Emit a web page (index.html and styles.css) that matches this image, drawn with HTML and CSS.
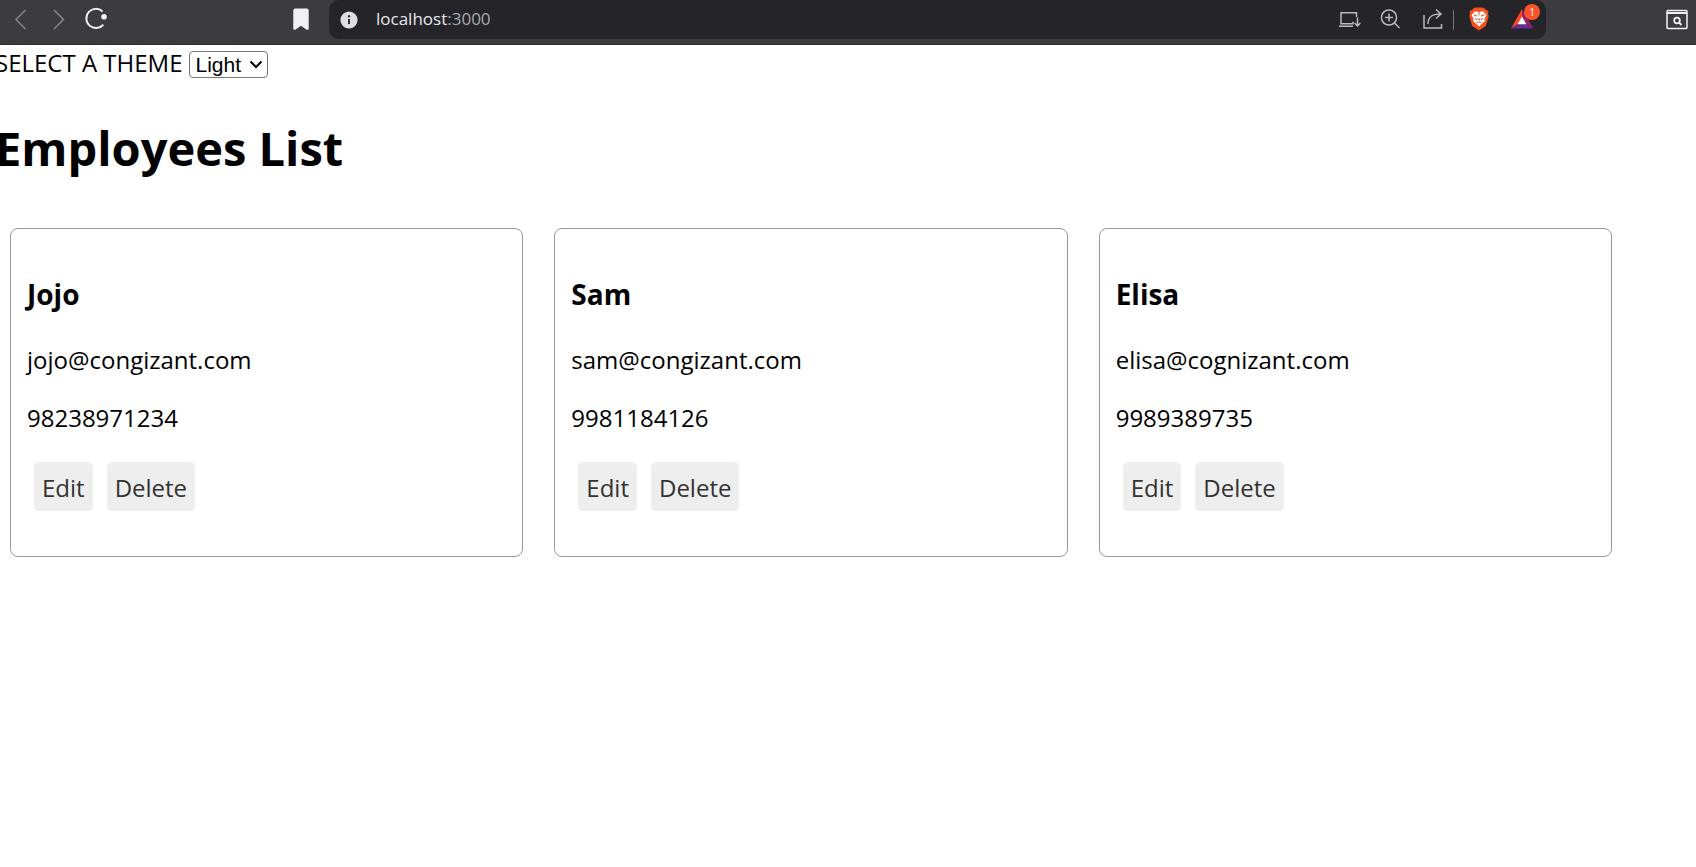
FILE: index.html
```html
<!DOCTYPE html>
<html lang="en">
<head>
<meta charset="utf-8">
<title>Employees List</title>
<link rel="stylesheet" href="styles.css">
</head>
<body>
<header class="toolbar">
  <nav class="toolbar-nav" aria-label="Browser">
    <div class="nav-group">
      <button class="tool dim" aria-label="Back"><svg viewBox="0 0 24 24"><path d="M17.500 3 8 12.500 17.500 22"/></svg></button>
      <button class="tool dim" aria-label="Forward"><svg viewBox="0 0 24 24"><path d="M8 3 17.500 12.500 8 22"/></svg></button>
      <button class="tool bright" aria-label="Reload"><svg viewBox="0 0 24 24"><path d="M18.600 4.500A9.600 9.600 0 1 0 19.300 17.600" stroke-width="1.900"/><circle cx="20" cy="9.800" r="2.800" class="fill"/></svg></button>
    </div>
    <button class="tool bright" aria-label="Bookmark"><svg viewBox="0 0 24 24"><path class="fill" d="M6.300 1.500h11.400q2 0 2 2v19l-2 .2-5.700-3.900-5.700 3.900-2-.2v-19q0-2 2-2z"/></svg></button>
  </nav>
  <div class="address">
    <button class="info" aria-label="Site information"><svg viewBox="0 0 18 18"><circle cx="9" cy="9" r="8.600" fill="#dedee3"/><path d="M9 8v5" stroke="#35353a" stroke-width="2"/><circle cx="9" cy="5.300" r="1.200" fill="#35353a"/></svg></button>
    <span class="url">localhost<span class="port">:3000</span></span>
    <div class="actions">
      <button class="tool" aria-label="Install app"><svg viewBox="0 0 24 24"><path d="M20.500 10V5.700H5v11h12v-2M3 19.300h14M21.500 10.500v8M18.600 16l2.900 3 2.900-3"/></svg></button>
      <button class="tool" aria-label="Zoom"><svg viewBox="0 0 24 24"><circle cx="11" cy="10.500" r="7.600"/><path d="m16.500 16 5 5M11 6.500v8M7 10.500h8"/></svg></button>
      <button class="tool" aria-label="Share"><svg viewBox="0 0 24 24"><path d="M4 8v13h17.500v-4M8 17C8 10 11.500 7 20.500 7M16 2.500 21 7l-5 4.500"/></svg></button>
      <span class="divider"></span>
      <button class="tool wide" aria-label="Brave Shields"><svg viewBox="0 0 24 24"><path fill="#f4511e" stroke="none" d="m7 1 2-.5h6l2 .5 2 2 2.500 1-.5 3 .8 2-3 10L12 23.500 5.200 19 2.200 9l.8-2-.5-3L5 3z"/><path fill="#fff" stroke="none" d="m8 4.300 4 .7 4-.7 3.500 3.700-2 4 .4 2L12 19.500 6.100 14l.4-2-2-4z"/><path stroke="#f4511e" stroke-width="1" d="m6.500 7.800 3.500 1.200M17.500 7.800 14 9M12 5v3.500M10.500 11.500 12 13l1.500-1.500M7.800 11.500l2.200 1.200M16.200 11.500 14 12.700M9.500 15.900l2.500-1.200 2.500 1.200"/></svg></button>
      <button class="tool wide rewards" aria-label="Rewards"><svg viewBox="0 0 24 24"><path fill="#ff4724" stroke="none" d="M12 2v8l-4 7-7 4.500z"/><path fill="#9e1f63" stroke="none" d="m12 2 11.300 19.500L16 17l-4-7z"/><path fill="#662d91" stroke="none" d="m.7 21.500 7.300-4.500h8l7.300 4.500z"/><path fill="#fff" stroke="none" d="m12 9.500 4.400 7.800H7.600z"/></svg><span class="badge">1</span></button>
    </div>
  </div>
  <div class="toolbar-end">
    <button class="tool bright" aria-label="Search in tabs"><svg viewBox="0 0 24 24"><rect x="2" y="3.500" width="20" height="18" rx="1"/><path d="M2 6h20" stroke-width="2"/><circle cx="12" cy="13.500" r="2.800" stroke-width="1.800"/><path d="m14 15.500 2.500 2.500" stroke-width="1.800"/></svg></button>
  </div>
</header>
<main class="page">
  <div class="theme">
    <label for="theme">SELECT A THEME</label>
    <span class="select-box">
      <select id="theme"><option>Light</option><option>Dark</option></select>
      <svg class="chevron" viewBox="0 0 14 10"><path d="m1.500 1.500 5.500 5.500L12.500 1.500"/></svg>
    </span>
  </div>
  <h1>Employees List</h1>
  <div class="cards">
    <article class="card">
      <h3>Jojo</h3>
      <p>jojo@congizant.com</p>
      <p>98238971234</p>
      <div class="buttons"><button>Edit</button><button>Delete</button></div>
    </article>
    <article class="card">
      <h3>Sam</h3>
      <p>sam@congizant.com</p>
      <p>9981184126</p>
      <div class="buttons"><button>Edit</button><button>Delete</button></div>
    </article>
    <article class="card">
      <h3>Elisa</h3>
      <p>elisa@cognizant.com</p>
      <p>9989389735</p>
      <div class="buttons"><button>Edit</button><button>Delete</button></div>
    </article>
  </div>
</main>
</body>
</html>
```
FILE: styles.css
```css
* { box-sizing: border-box; }

body {
  margin: 0;
  background: #fff;
  color: #000;
  font: 24px/33px "Segoe UI", "Open Sans", "Noto Sans", sans-serif;
  overflow-x: hidden;
}

button { font: inherit; border: 0; cursor: pointer; }

/* Browser toolbar */
.toolbar {
  display: flex;
  padding-bottom: 5px;
  background: #3c3b40;
  border-bottom: 1px solid #2c2b30;
}
.toolbar-nav {
  display: flex;
  flex: 0 0 320px;
  justify-content: space-between;
  padding-left: 1px;
  margin-right: 9px;
}
.nav-group { display: flex; }
.tool {
  display: flex;
  align-items: center;
  justify-content: center;
  width: 38px;
  height: 39px;
  padding: 0 0 1px;
  background: none;
  color: #b9b9be;
}
.tool svg {
  width: 24px;
  height: 24px;
  fill: none;
  stroke: currentColor;
  stroke-width: 1.5;
  overflow: visible;
}
.tool .fill { fill: currentColor; stroke: none; }
.dim { color: #85858a; }
.bright { color: #f0f1f5; }
.address {
  display: flex;
  flex: 1;
  align-items: center;
  padding: 0 3px 0 11px;
  border-radius: 10px;
  background: #242429;
}
.info {
  display: flex;
  padding: 0;
  margin-right: 18px;
  background: none;
}
.info svg { width: 18px; height: 18px; }
.url { flex: 1; color: #e8e8ec; font-size: 17px; line-height: 37px; padding-bottom: 2px; }
.port { color: #a9aab2; }
.actions { display: flex; align-items: center; }
.actions .tool { width: 42px; }
.actions .wide { width: 43px; }
.divider { width: 1px; height: 20px; margin-right: 3px; background: #77777c; }
.rewards { position: relative; }
.badge {
  position: absolute;
  top: 4px;
  right: 3px;
  width: 16px;
  height: 16px;
  border-radius: 50%;
  background: #fb542b;
  color: #fff;
  font-size: 10px;
  line-height: 16px;
}
.toolbar-end {
  display: flex;
  flex: 0 0 150px;
  justify-content: flex-end;
}

/* Page */
.page { padding-top: 1px; margin-left: -5px; }
.theme { display: flex; gap: 6px; }
.select-box { position: relative; margin-top: 5px; }
.select-box select {
  display: block;
  appearance: none;
  height: 27px;
  padding: 0 25px 0 6px;
  border: 1px solid #767676;
  border-radius: 4px;
  background: #fff;
  color: #000;
  font: 21px/25px "Liberation Sans", Arial, sans-serif;
}
.chevron {
  position: absolute;
  top: 9px;
  right: 5px;
  width: 14px;
  height: 10px;
  fill: none;
  stroke: #000;
  stroke-width: 2;
  pointer-events: none;
}
h1 { margin: 36px 0 46px; font-size: 47px; line-height: 67px; }
.cards {
  display: grid;
  grid-template-columns: repeat(3, 1fr);
  gap: 31px;
  padding: 0 84px 0 15px;
}
.card {
  padding: 16px 16px 45px;
  border: 1px solid #999;
  border-radius: 8px;
}
.card h3 { margin: 30px 0 29px; font-size: 28px; line-height: 39px; }
.card p { margin: 0 0 25px; }
.buttons { display: flex; gap: 14px; padding: 3px 7px 0; }
.buttons button {
  padding: 9px 8px 7px;
  border-radius: 5px;
  background: #eee;
  color: #333;
}
```
